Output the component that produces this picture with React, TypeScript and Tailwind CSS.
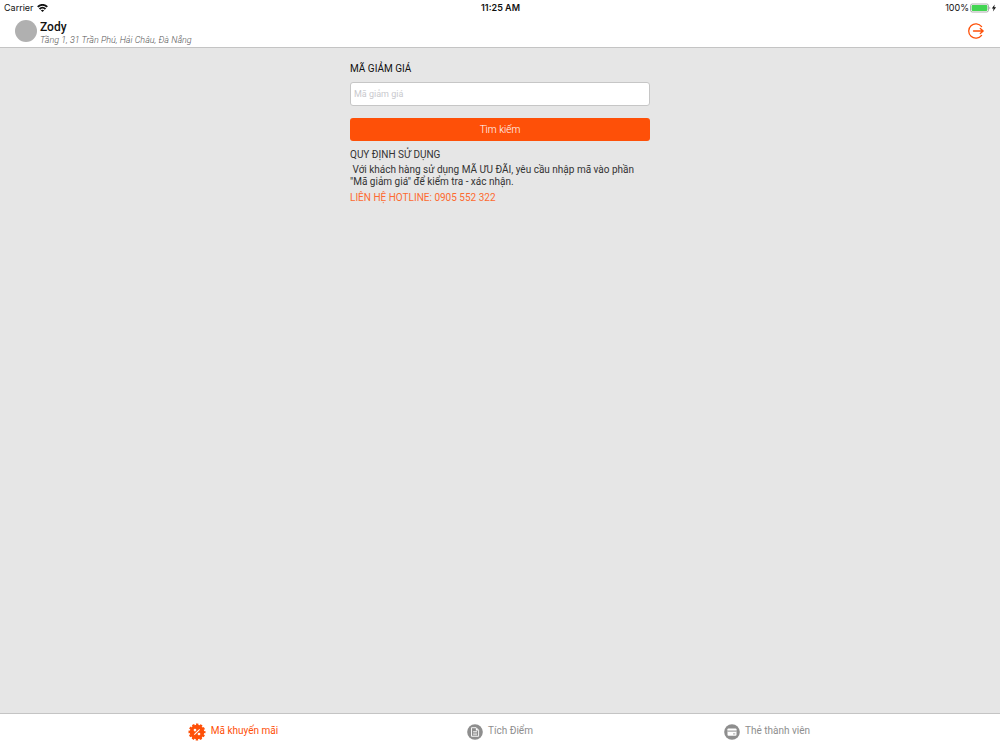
import { useState } from "react";

function WifiIcon() {
  return (
    <svg width="11" height="8" viewBox="0 0 22 16" aria-hidden="true" fill="none" stroke="#111" strokeWidth="3.800">
      <path d="M1.500 5.800C7 .4 15 .4 20.500 5.800" />
      <path d="M5 10c3.600-3.300 8.400-3.300 12 0" />
      <path d="M11 16l-3.400-3.500c2-1.500 4.800-1.500 6.800 0z" fill="#111" stroke="none" />
    </svg>
  );
}

function BatteryIcon() {
  return (
    <svg width="27" height="10" viewBox="0 0 27 10" aria-hidden="true">
      <rect x="0.500" y="1" width="18" height="8" rx="1.800" fill="#fff" stroke="#999" strokeWidth="0.800" />
      <rect x="1.600" y="2.100" width="15.800" height="5.800" rx="0.800" fill="#42d552" />
      <path d="M19.500 3.700c1 .4 1 2.200 0 2.600z" fill="#999" />
      <path d="M24.700 1.500L21.800 5.400h1.800l-.7 3.200 3.200-4.400h-1.900z" fill="#111" />
    </svg>
  );
}

function LogoutIcon() {
  return (
    <svg width="18" height="18" viewBox="0 0 18 18" aria-hidden="true" fill="none" stroke="#fe5008" strokeWidth="1.300" strokeLinecap="round" strokeLinejoin="round">
      <path d="M14.600 4.600a7.200 7.200 0 1 0 0 8.800" />
      <path d="M6.500 9h9.700M13.300 6.400L16.200 9l-2.900 2.600" />
    </svg>
  );
}

function CouponIcon() {
  return (
    <svg width="18" height="18" viewBox="0 0 18 18" aria-hidden="true">
      <circle cx="9" cy="9" r="7.300" fill="#fe5008" />
      <circle cx="9" cy="9" r="7.600" fill="none" stroke="#fe5008" strokeWidth="1.800" strokeDasharray="2.400 1.579" strokeDashoffset="1.200" />
      <g fill="none" stroke="#fff">
        <path d="M11.700 6.300l-5.400 5.400" strokeWidth="1.100" />
        <circle cx="7" cy="7.100" r="0.800" strokeWidth="1.100" />
        <circle cx="11" cy="11" r="0.800" strokeWidth="1.100" />
      </g>
    </svg>
  );
}

function PointsIcon() {
  return (
    <svg width="16" height="16" viewBox="0 0 16 16" aria-hidden="true">
      <circle cx="8" cy="8" r="7.800" fill="#8e8e8e" />
      <path d="M4.500 3.700h4.700l2.400 2.400v6.200H4.500z" fill="#8e8e8e" stroke="#fff" strokeWidth="0.900" />
      <path d="M8.900 3.700v2.700h2.700z" fill="#fff" />
      <path d="M6.100 7.500h3.900M6.100 9.100h3.900M6.100 10.700h3.900" fill="none" stroke="#fff" strokeWidth="0.700" />
    </svg>
  );
}

function CardIcon() {
  return (
    <svg width="16" height="16" viewBox="0 0 16 16" aria-hidden="true">
      <circle cx="8" cy="8" r="7.800" fill="#8e8e8e" />
      <rect x="3.500" y="4.400" width="9" height="7.300" rx="0.900" fill="#fff" />
      <path d="M3.500 7.100h9" stroke="#8e8e8e" strokeWidth="1" />
      <path d="M9 9.900h2.300" stroke="#8e8e8e" strokeWidth="0.800" />
    </svg>
  );
}

const tabs = [
  { label: "Mã khuyến mãi", Icon: CouponIcon },
  { label: "Tích Điểm", Icon: PointsIcon },
  { label: "Thẻ thành viên", Icon: CardIcon },
];

export default function App() {
  const [active, setActive] = useState(0);
  const [code, setCode] = useState("");

  return (
    <div className="flex min-h-screen flex-col bg-[#e6e6e6] font-['Roboto',sans-serif] text-[#333]">
      <header className="border-b border-[#c4c4c4] bg-white">
        <div className="grid h-4 grid-cols-3 items-center pr-[3px] pl-1 font-['Inter',sans-serif] text-[9px] text-[#111]">
          <div className="flex items-center gap-[3px]">
            <span>Carrier</span>
            <WifiIcon />
          </div>
          <span className="text-center font-semibold">11:25 AM</span>
          <div className="flex items-center justify-end gap-px">
            <span>100%</span>
            <BatteryIcon />
          </div>
        </div>
        <div className="flex h-[31px] items-start justify-between px-[15px]">
          <div className="flex items-start gap-[3px] pt-1">
            <div className="size-[22px] rounded-full bg-[#b0b0b0]" />
            <div>
              <h1 className="text-[12px] leading-[14px] font-medium text-[#111]">Zody</h1>
              <p className="text-[9px] leading-3 font-light text-[#555] italic">Tầng 1, 31 Trần Phú, Hải Châu, Đà Nẵng</p>
            </div>
          </div>
          <button type="button" aria-label="Đăng xuất" className="pt-1.5">
            <LogoutIcon />
          </button>
        </div>
      </header>

      <main className="mx-auto w-full max-w-[300px] flex-1 pt-[13px]">
        <form onSubmit={(e) => e.preventDefault()} className="flex flex-col">
          <label htmlFor="code" className="text-[10px] leading-4 text-[#111]">MÃ GIẢM GIÁ</label>
          <input
            id="code"
            value={code}
            onChange={(e) => setCode(e.target.value)}
            placeholder="Mã giảm giá"
            className="mt-[5px] h-6 rounded-[3px] border border-[#c6c6c6] bg-white px-[3px] text-[9px] placeholder:text-[#c9c9cd]"
          />
          <button type="submit" className="mt-3 h-[23px] rounded-[3px] bg-[#fe5008] text-[10px] font-light text-white">
            Tìm kiếm
          </button>
        </form>
        <section className="pt-1.5">
          <h2 className="mb-px text-[10px] leading-4">QUY ĐỊNH SỬ DỤNG</h2>
          <p className="text-[10px] leading-3 whitespace-pre-line">
            &nbsp;Với khách hàng sử dụng MÃ ƯU ĐÃI, yêu cầu nhập mã vào phần{"\n"}"Mã giảm giá" để kiểm tra - xác nhận.
          </p>
          <a href="tel:0905552322" className="mt-0.5 block text-[10px] leading-4 text-[#fd6a30]">LIÊN HỆ HOTLINE: 0905 552 322</a>
        </section>
      </main>

      <nav className="flex h-[37px] justify-center border-t border-[#c4c4c4] bg-white">
        {tabs.map(({ label, Icon }, i) => (
          <button
            key={label}
            type="button"
            onClick={() => setActive(i)}
            aria-current={active === i ? "page" : undefined}
            className={`flex w-[267px] items-center justify-center gap-[5px] text-[10px] leading-4 ${active === i ? "text-[#fe5008]" : "text-[#8e8e8e]"}`}
          >
            <Icon />
            <span className="pb-0.5">{label}</span>
          </button>
        ))}
      </nav>
    </div>
  );
}
